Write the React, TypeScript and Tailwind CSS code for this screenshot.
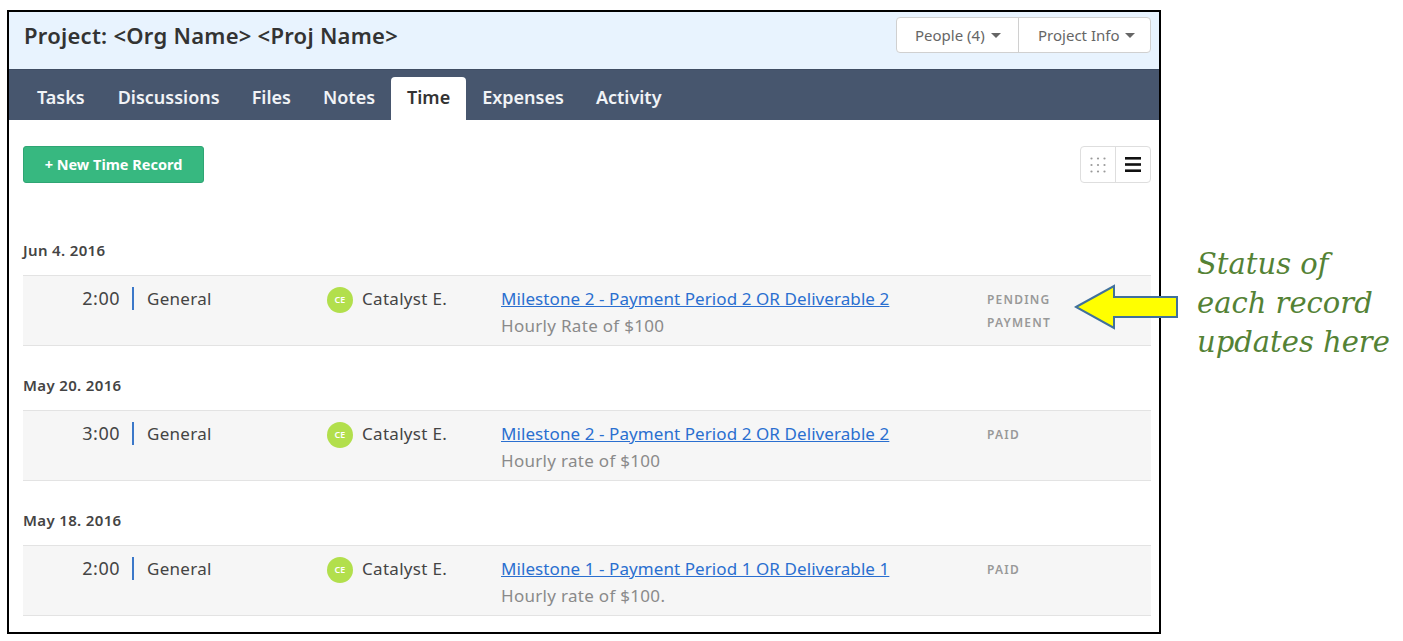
const uiFont = "font-['Noto_Sans','Open_Sans',sans-serif]";

const tabs = ["Tasks", "Discussions", "Files", "Notes", "Time", "Expenses", "Activity"];

const groups = [
  {
    date: "Jun 4. 2016",
    time: "2:00",
    link: "Milestone 2 - Payment Period 2 OR Deliverable 2",
    note: "Hourly Rate of $100",
    status: ["PENDING", "PAYMENT"],
  },
  {
    date: "May 20. 2016",
    time: "3:00",
    link: "Milestone 2 - Payment Period 2 OR Deliverable 2",
    note: "Hourly rate of $100",
    status: ["PAID"],
  },
  {
    date: "May 18. 2016",
    time: "2:00",
    link: "Milestone 1 - Payment Period 1 OR Deliverable 1",
    note: "Hourly rate of $100.",
    status: ["PAID"],
  },
];

function Caret() {
  return <span className="ml-[6px] inline-block h-0 w-0 border-x-[5px] border-t-[5px] border-x-transparent border-t-[#666]" />;
}

function TimeRow({ group }: { group: (typeof groups)[number] }) {
  return (
    <div className="flex h-[71px] border-y border-[#e3e3e3] bg-[#f6f6f6] pt-[11px] text-[17px] tracking-[0.3px] text-[#444]">
      <div className="h-[23px] w-[111px] border-r-2 border-[#3b78c9] pr-[12px] text-right text-[18px] leading-[23px] tracking-[0.5px]">{group.time}</div>
      <div className="w-[193px] pl-[13px] leading-[23px]">General</div>
      <div className="flex w-[174px] items-start">
        <span className="flex h-[26px] w-[26px] items-center justify-center rounded-full bg-[#b2df4c] text-[9px] font-semibold tracking-normal text-white">CE</span>
        <span className="ml-[9px] leading-[23px]">Catalyst E.</span>
      </div>
      <div className="w-[486px]">
        <a href="#" className="block leading-[23px] tracking-[0.08px] text-[#2a6fd0] underline">{group.link}</a>
        <div className="mt-[4px] leading-[23px] text-[#8a8a8a]">{group.note}</div>
      </div>
      <div className="pt-[1px] text-[12px] font-semibold tracking-[1.2px] text-[#999]">
        {group.status.map((s) => (
          <div key={s} className="h-[23px] leading-[23px]">{s}</div>
        ))}
      </div>
    </div>
  );
}

export default function App() {
  return (
    <div className={`relative flex h-[641px] w-[1403px] items-start overflow-hidden bg-white pt-[10px] pl-[7px] ${uiFont}`}>
      <div className="h-[624px] w-[1154px] shrink-0 border-2 border-black">
        <div className="flex h-[57px] items-start justify-between bg-[#e8f3fe] pt-[5px] pr-[8px] pl-[15px]">
          <h1 className="text-[22px] leading-[37px] font-semibold tracking-[0.26px] text-[#333]">{"Project: <Org Name> <Proj Name>"}</h1>
          <div className="flex h-[36px] rounded-[4px] border border-[#d0d0d0] bg-white text-[15px] text-[#666]">
            <button className="flex w-[122px] items-center border-r border-[#d0d0d0] pl-[18px]">
              People (4)
              <Caret />
            </button>
            <button className="flex w-[131px] items-center pl-[19px]">
              Project Info
              <Caret />
            </button>
          </div>
        </div>

        <nav className="flex h-[51px] items-end border-t border-[#3f4d63] bg-[#47566e] pl-[12px]">
          {tabs.map((t) => (
            <a
              key={t}
              href="#"
              className={
                t === "Time"
                  ? "flex h-[43px] items-center rounded-t-[4px] bg-white px-4 pb-[2px] text-[18px] font-semibold text-[#333]"
                  : t === "Tasks"
                    ? "mr-[1px] flex h-[43px] items-center px-4 pb-[2px] text-[18px] font-semibold text-[#f1f3f6]"
                    : "flex h-[43px] items-center px-4 pb-[2px] text-[18px] font-semibold text-[#f1f3f6]"
              }
            >
              {t}
            </a>
          ))}
        </nav>

        <div className="pr-[8px] pl-[14px]">
          <div className="flex items-start justify-between pt-[26px]">
            <button className="flex h-[37px] w-[181px] items-center justify-center rounded-[3px] border border-[#2fa574] bg-[#37b880] text-[14.5px] font-bold text-white">
              + New Time Record
            </button>
            <div className="flex h-[37px] w-[71px] rounded-[4px] border border-[#dedede]">
              <span className="flex w-[35px] items-center justify-center border-r border-[#dedede]">
                <svg width="16" height="16" viewBox="0 0 16 16" fill="#9a9a9a">
                  {[1.5, 8, 14.5].map((y) =>
                    [1.5, 8, 14.5].map((x) => <circle key={`${x}-${y}`} cx={x} cy={y} r="1.1" />),
                  )}
                </svg>
              </span>
              <span className="flex flex-1 items-center justify-center">
                <svg width="16" height="15" viewBox="0 0 16 15" fill="#111">
                  <rect y="0" width="16" height="2.6" />
                  <rect y="6.2" width="16" height="2.6" />
                  <rect y="12.4" width="16" height="2.6" />
                </svg>
              </span>
            </div>
          </div>

          <div className="pt-[28px]">
            {groups.map((g) => (
              <section key={g.date} className="pt-[27px]">
                <div className="mb-[13px] h-[24px] text-[15px] leading-[24px] font-semibold tracking-[0.35px] text-[#444]">{g.date}</div>
                <TimeRow group={g} />
              </section>
            ))}
          </div>
        </div>
      </div>

      <p className="mt-[235px] ml-[36px] font-['DejaVu_Serif',serif] text-[29px] leading-[39px] text-[#548235] italic">
        Status of
        <br />
        each record
        <br />
        updates here
      </p>

      {/* callout arrow over the frame edge */}
      <svg className="absolute top-[284px] left-[1074px]" width="106" height="46" viewBox="0 0 106 46">
        <polygon
          points="2,23 40,2 40,13 103,13 103,33 40,33 40,44"
          fill="#ffff00"
          stroke="#41719c"
          strokeWidth="2"
        />
      </svg>
    </div>
  );
}
